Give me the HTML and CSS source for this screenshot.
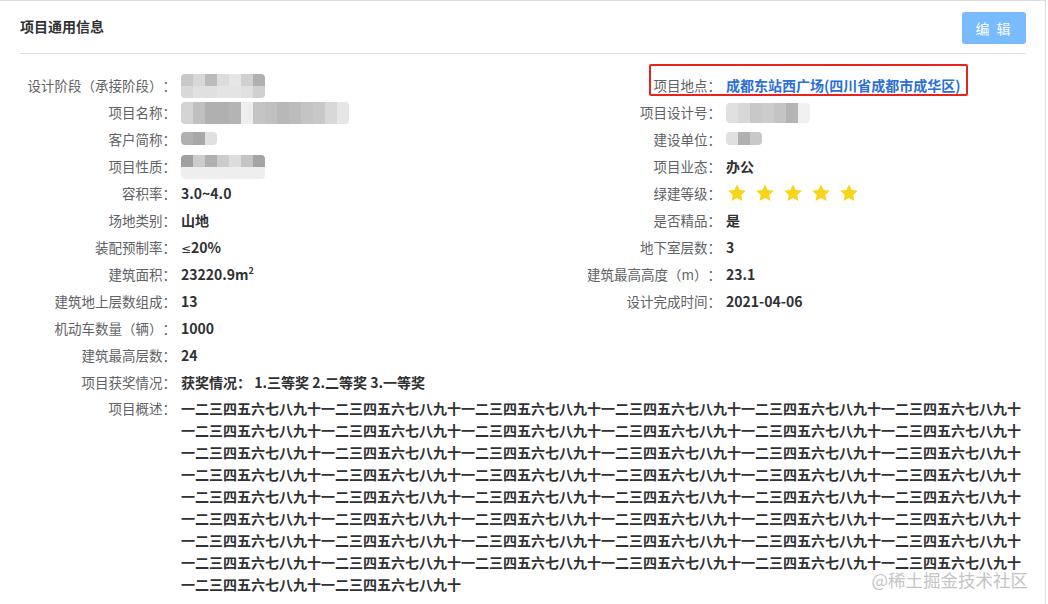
FILE: index.html
```html
<!DOCTYPE html>
<html lang="zh-CN">

<head>
    <meta charset="UTF-8">
    <meta name="viewport" content="width=device-width, initial-scale=1.0">
    <title>项目通用信息</title>
    <link rel="stylesheet" href="styles.css">
</head>

<body>
    <div class="card">
        <div class="card-header">
            <span class="card-title">项目通用信息</span>
            <button type="button" class="btn-edit">编 辑</button>
        </div>

        <div class="info">
            <div class="columns">
                <div class="col col-left">
                    <div class="item"><span class="label">设计阶段（承接阶段）：</span>
                        <span class="mosaic m-stage">
                            <i class="c8"></i><i class="d8"></i><i class="bb"></i><i class="dd"></i><i class="e6"></i><i class="d0"></i><i class="b0"></i>
                            <i class="d8"></i><i class="e0"></i><i class="e0"></i><i class="e4"></i><i class="e4"></i><i class="e0"></i><i class="d0"></i>
                        </span>
                    </div>
                    <div class="item"><span class="label">项目名称：</span>
                        <span class="mosaic m-name">
                            <i class="d4"></i><i class="c0"></i><i class="b0"></i><i class="b0"></i><i class="b4"></i><i class="ee"></i><i class="c4"></i><i class="c0"></i><i class="b8"></i><i class="bc"></i><i class="c4"></i><i class="c8"></i><i class="d8"></i><i class="e6"></i>
                        </span>
                    </div>
                    <div class="item"><span class="label">客户简称：</span>
                        <span class="mosaic m-short"><i class="b0"></i><i class="a8"></i><i class="e0"></i></span>
                    </div>
                    <div class="item"><span class="label">项目性质：</span>
                        <span class="mosaic m-stage">
                            <i class="a0"></i><i class="cc"></i><i class="b0"></i><i class="cc"></i><i class="dd"></i><i class="c4"></i><i class="a4"></i>
                            <i class="ee"></i><i class="ee"></i><i class="ee"></i><i class="ee"></i><i class="ee"></i><i class="ee"></i><i class="ee"></i>
                        </span>
                    </div>
                    <div class="item"><span class="label">容积率：</span><span class="value">3.0~4.0</span></div>
                    <div class="item"><span class="label">场地类别：</span><span class="value">山地</span></div>
                    <div class="item"><span class="label">装配预制率：</span><span class="value"><span class="sym">≤</span>20%</span></div>
                    <div class="item"><span class="label">建筑面积：</span><span class="value">23220.9m<sup>2</sup></span></div>
                    <div class="item"><span class="label">建筑地上层数组成：</span><span class="value">13</span></div>
                    <div class="item"><span class="label">机动车数量（辆）：</span><span class="value">1000</span></div>
                    <div class="item"><span class="label">建筑最高层数：</span><span class="value">24</span></div>
                </div>

                <div class="col col-right">
                    <div class="item marked"><span class="label">项目地点：</span><span class="value link">成都东站西广场(四川省成都市成华区)</span></div>
                    <div class="item"><span class="label">项目设计号：</span>
                        <span class="mosaic m-code">
                            <i class="e0"></i><i class="d8"></i><i class="c8"></i><i class="cc"></i><i class="c4"></i><i class="b4"></i><i class="f0"></i>
                        </span>
                    </div>
                    <div class="item"><span class="label">建设单位：</span>
                        <span class="mosaic m-short"><i class="e0"></i><i class="b0"></i><i class="c8"></i></span>
                    </div>
                    <div class="item"><span class="label">项目业态：</span><span class="value">办公</span></div>
                    <div class="item"><span class="label">绿建等级：</span>
                        <span class="stars">
                            <svg viewBox="0 0 24 24"><path d="M12 1.5l3.2 6.9 7.4.8-5.5 5.1 1.5 7.4L12 18l-6.6 3.7 1.5-7.4L1.4 9.2l7.4-.8z"/></svg>
                            <svg viewBox="0 0 24 24"><path d="M12 1.5l3.2 6.9 7.4.8-5.5 5.1 1.5 7.4L12 18l-6.6 3.7 1.5-7.4L1.4 9.2l7.4-.8z"/></svg>
                            <svg viewBox="0 0 24 24"><path d="M12 1.5l3.2 6.9 7.4.8-5.5 5.1 1.5 7.4L12 18l-6.6 3.7 1.5-7.4L1.4 9.2l7.4-.8z"/></svg>
                            <svg viewBox="0 0 24 24"><path d="M12 1.5l3.2 6.9 7.4.8-5.5 5.1 1.5 7.4L12 18l-6.6 3.7 1.5-7.4L1.4 9.2l7.4-.8z"/></svg>
                            <svg viewBox="0 0 24 24"><path d="M12 1.5l3.2 6.9 7.4.8-5.5 5.1 1.5 7.4L12 18l-6.6 3.7 1.5-7.4L1.4 9.2l7.4-.8z"/></svg>
                        </span>
                    </div>
                    <div class="item"><span class="label">是否精品：</span><span class="value">是</span></div>
                    <div class="item"><span class="label">地下室层数：</span><span class="value">3</span></div>
                    <div class="item"><span class="label">建筑最高高度（m）：</span><span class="value">23.1</span></div>
                    <div class="item"><span class="label">设计完成时间：</span><span class="value">2021-04-06</span></div>
                </div>
            </div>

            <div class="item"><span class="label">项目获奖情况：</span><span class="value">获奖情况：&nbsp;1.三等奖 2.二等奖 3.一等奖</span></div>
            <div class="item item-long"><span class="label">项目概述：</span>
                <span class="value summary" id="summary"></span>
            </div>
        </div>

        <div class="watermark">@稀土掘金技术社区</div>
    </div>

    <script>
        // overview text: the same ten numerals, fifty times
        document.getElementById('summary').textContent = '一二三四五六七八九十'.repeat(50);
    </script>
</body>

</html>
```

FILE: styles.css
```css
body {
    margin: 0;
    padding: 0;
    background-color: #fff;
    font-family: "Noto Sans CJK SC", "Microsoft YaHei", sans-serif;
    text-spacing-trim: space-all;
}

.card {
    position: relative;
    width: 1026px;
    height: 603px;
    padding-right: 19px;
    border-top: 1px solid #dcdcdc;
    border-right: 1px solid #dcdcdc;
    overflow: hidden;
}

.card-header {
    display: flex;
    justify-content: space-between;
    align-items: center;
    height: 52px;
    margin-left: 20px;
    border-bottom: 1px solid #dcdfe6;
}

.card-title {
    font-size: 14px;
    font-weight: bold;
    color: #303133;
    margin-bottom: 2px;
}

.btn-edit {
    width: 64px;
    height: 32px;
    margin-top: 1px;
    padding: 0;
    border: none;
    border-radius: 3px;
    background-color: #79bbff;
    color: #fff;
    font-family: inherit;
    font-size: 14px;
    letter-spacing: 2px;
    cursor: pointer;
}

.info {
    padding-top: 17px;
}

.columns {
    display: flex;
}

.col-left {
    width: 524px;
}

.col-right {
    flex: 1;
}

.item {
    position: relative;
    display: flex;
    align-items: center;
    height: 27px;
}

.label {
    flex: none;
    width: 176px;
    margin-right: 5px;
    text-align: right;
    white-space: nowrap;
    font-size: 13.5px;
    color: #606266;
}

.col-right .label {
    width: 197px;
}

.value {
    font-size: 14px;
    font-weight: bold;
    color: #303133;
    white-space: nowrap;
}

.value sup {
    font-size: 9px;
    vertical-align: 6px;
    line-height: 0;
}

.sym {
    font-family: "DejaVu Sans", sans-serif;
    font-weight: normal;
    font-size: 12px;
}

.link {
    color: #2b6fd4;
}

/* annotation box round the location */
.marked::after {
    content: "";
    position: absolute;
    left: 125px;
    top: -7px;
    width: 315px;
    height: 28px;
    border: 2.5px solid #e8231d;
    border-radius: 2px;
}

.stars {
    display: flex;
    gap: 8px;
    margin-left: 1px;
}

.stars svg {
    width: 20px;
    height: 20px;
    fill: #f8d41a;
}

.item-long {
    align-items: flex-start;
    height: auto;
}

.item-long .label {
    line-height: 27px;
}

.summary {
    flex: 1;
    white-space: normal;
    word-break: break-all;
    line-height: 22px;
    padding-top: 2px;
}

/* pixelated placeholders for hidden values */
.mosaic {
    display: grid;
    grid-auto-rows: 12px;
    border-radius: 4px;
    overflow: hidden;
    filter: blur(0.7px);
}

.mosaic i {
    display: block;
}

.m-stage {
    grid-template-columns: repeat(7, 12px);
    margin-top: 3px;
}

.m-name {
    grid-template-columns: repeat(14, 12px);
    grid-auto-rows: 22px;
    margin-top: 3px;
}

.m-short {
    grid-template-columns: repeat(3, 12px);
    grid-auto-rows: 13px;
}

.m-code {
    grid-template-columns: repeat(7, 12px);
    grid-auto-rows: 20px;
    margin-top: 2px;
}

.a0 { background: #a0a0a0; }
.a4 { background: #a4a4a4; }
.a8 { background: #a8a8a8; }
.b0 { background: #b0b0b0; }
.b4 { background: #b4b4b4; }
.b8 { background: #b8b8b8; }
.bb { background: #bbbbbb; }
.bc { background: #bcbcbc; }
.c0 { background: #c0c0c0; }
.c4 { background: #c4c4c4; }
.c8 { background: #c8c8c8; }
.cc { background: #cccccc; }
.d0 { background: #d0d0d0; }
.d4 { background: #d4d4d4; }
.d8 { background: #d8d8d8; }
.dd { background: #dddddd; }
.e0 { background: #e0e0e0; }
.e4 { background: #e4e4e4; }
.e6 { background: #e6e6e6; }
.ee { background: #eeeeee; }
.f0 { background: #f0f0f0; }

.watermark {
    position: absolute;
    right: 17px;
    bottom: 12px;
    font-size: 17.5px;
    color: #c4c4c4;
    text-shadow: 0 0 2px #fff, 0 0 2px #fff;
}
```
